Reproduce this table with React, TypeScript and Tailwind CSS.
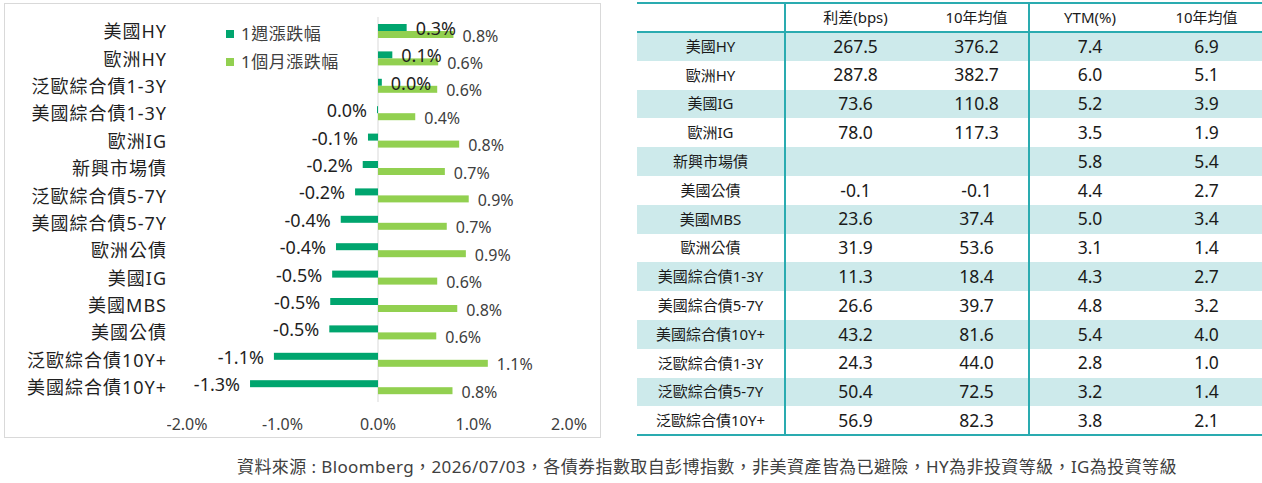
const FONT = '"Noto Sans", "Noto Sans CJK TC", sans-serif'

const SCALE = 95.5 // px per 1%
const ZERO = 211   // zero line inside the plot svg
const ROW = 27.4
const TOP = 13.5

const bars = [
  { name: '美國HY', w: 0.3, wl: '0.3%', m: 0.79, ml: '0.8%' },
  { name: '歐洲HY', w: 0.15, wl: '0.1%', m: 0.63, ml: '0.6%' },
  { name: '泛歐綜合債1-3Y', w: 0.04, wl: '0.0%', m: 0.62, ml: '0.6%' },
  { name: '美國綜合債1-3Y', w: -0.01, wl: '0.0%', m: 0.39, ml: '0.4%' },
  { name: '歐洲IG', w: -0.105, wl: '-0.1%', m: 0.85, ml: '0.8%' },
  { name: '新興市場債', w: -0.16, wl: '-0.2%', m: 0.7, ml: '0.7%' },
  { name: '泛歐綜合債5-7Y', w: -0.24, wl: '-0.2%', m: 0.95, ml: '0.9%' },
  { name: '美國綜合債5-7Y', w: -0.39, wl: '-0.4%', m: 0.72, ml: '0.7%' },
  { name: '歐洲公債', w: -0.44, wl: '-0.4%', m: 0.92, ml: '0.9%' },
  { name: '美國IG', w: -0.48, wl: '-0.5%', m: 0.62, ml: '0.6%' },
  { name: '美國MBS', w: -0.5, wl: '-0.5%', m: 0.83, ml: '0.8%' },
  { name: '美國公債', w: -0.51, wl: '-0.5%', m: 0.61, ml: '0.6%' },
  { name: '泛歐綜合債10Y+', w: -1.09, wl: '-1.1%', m: 1.15, ml: '1.1%' },
  { name: '美國綜合債10Y+', w: -1.34, wl: '-1.3%', m: 0.78, ml: '0.8%' },
]

const rows = [
  ['美國HY', '267.5', '376.2', '7.4', '6.9'],
  ['歐洲HY', '287.8', '382.7', '6.0', '5.1'],
  ['美國IG', '73.6', '110.8', '5.2', '3.9'],
  ['歐洲IG', '78.0', '117.3', '3.5', '1.9'],
  ['新興市場債', '', '', '5.8', '5.4'],
  ['美國公債', '-0.1', '-0.1', '4.4', '2.7'],
  ['美國MBS', '23.6', '37.4', '5.0', '3.4'],
  ['歐洲公債', '31.9', '53.6', '3.1', '1.4'],
  ['美國綜合債1-3Y', '11.3', '18.4', '4.3', '2.7'],
  ['美國綜合債5-7Y', '26.6', '39.7', '4.8', '3.2'],
  ['美國綜合債10Y+', '43.2', '81.6', '5.4', '4.0'],
  ['泛歐綜合債1-3Y', '24.3', '44.0', '2.8', '1.0'],
  ['泛歐綜合債5-7Y', '50.4', '72.5', '3.2', '1.4'],
  ['泛歐綜合債10Y+', '56.9', '82.3', '3.8', '2.1'],
]

function Plot() {
  return (
    <svg width={430} height={433} className="block shrink-0">
      <line x1={ZERO} x2={ZERO} y1={13} y2={398} stroke="#d9d9d9" strokeWidth={1} />
      {bars.map((b, i) => {
        const top = TOP + ROW * i
        const dw = Math.max(Math.abs(b.w) * SCALE, 1)
        const dx = b.w >= 0 ? ZERO : ZERO - dw
        const mw = b.m * SCALE
        return (
          <g key={b.name}>
            <rect x={dx} y={top + 6.5} width={dw} height={7} fill="#00a56e" />
            <rect x={ZERO} y={top + 13.5} width={mw} height={7} fill="#92d050" />
            <text
              x={b.w >= 0 ? ZERO + dw + 9 : dx - 10}
              y={top + 10.5}
              textAnchor={b.w >= 0 ? 'start' : 'end'}
              dominantBaseline="central"
              className="fill-[#1f1f1f] text-[18px]"
            >
              {b.wl}
            </text>
            <text
              x={ZERO + mw + 9}
              y={top + 18}
              dominantBaseline="central"
              className="fill-[#404040] text-[16px]"
            >
              {b.ml}
            </text>
          </g>
        )
      })}
      {['-2.0%', '-1.0%', '0.0%', '1.0%', '2.0%'].map((t, k) => (
        <text
          key={t}
          x={ZERO + (k - 2) * SCALE}
          y={420}
          textAnchor="middle"
          dominantBaseline="central"
          className="fill-[#404040] text-[16px]"
        >
          {t}
        </text>
      ))}
    </svg>
  )
}

function Chart() {
  return (
    <div className="relative ml-[4px] mt-[3px] flex h-[435px] w-[597px] shrink-0 border border-[#d9d9d9] bg-white">
      <div className="flex w-[162px] shrink-0 flex-col pt-[13.5px]">
        {bars.map(b => (
          <div
            key={b.name}
            className="flex h-[27.4px] items-center justify-end text-[18px] leading-none tracking-[1px] text-[#1f1f1f]"
          >
            {b.name}
          </div>
        ))}
      </div>
      <Plot />
      <div className="absolute left-[221px] top-[16px] flex flex-col text-[17px] tracking-[0.5px] text-[#404040]">
        <div className="flex h-[28px] items-center gap-[7px]">
          <span className="h-[8px] w-[8px] bg-[#00a56e]" />
          <span>1週漲跌幅</span>
        </div>
        <div className="flex h-[28px] items-center gap-[7px]">
          <span className="h-[8px] w-[8px] bg-[#92d050]" />
          <span>1個月漲跌幅</span>
        </div>
      </div>
    </div>
  )
}

function Table() {
  return (
    <table className="ml-[36px] mt-[2px] w-[626px] table-fixed border-collapse text-center text-[#1a1a1a]">
      <colgroup>
        <col className="w-[148px]" />
        <col className="w-[140px]" />
        <col className="w-[104px]" />
        <col className="w-[121px]" />
        <col className="w-[113px]" />
      </colgroup>
      <thead>
        <tr className="h-[29px] border-y-2 border-[#2aabb0] text-[15px]">
          <th className="border-r-2 border-[#2aabb0] font-normal"></th>
          <th className="font-normal">利差(bps)</th>
          <th className="border-r-2 border-[#2aabb0] font-normal">10年均值</th>
          <th className="font-normal">YTM(%)</th>
          <th className="font-normal">10年均值</th>
        </tr>
      </thead>
      <tbody>
        {rows.map((r, i) => (
          <tr
            key={r[0]}
            className={
              'h-[28.8px] ' +
              (i % 2 === 0 ? 'bg-[#cdeaeb] ' : 'bg-white ') +
              (i === rows.length - 1 ? 'border-b-2 border-[#2aabb0]' : '')
            }
          >
            <td className="border-r-2 border-[#2aabb0] p-0 text-[15px] leading-none">{r[0]}</td>
            <td className="p-0 text-[17.5px] leading-none">{r[1]}</td>
            <td className="border-r-2 border-[#2aabb0] p-0 text-[17.5px] leading-none">{r[2]}</td>
            <td className="p-0 text-[17.5px] leading-none">{r[3]}</td>
            <td className="p-0 text-[17.5px] leading-none">{r[4]}</td>
          </tr>
        ))}
      </tbody>
    </table>
  )
}

export default function App() {
  return (
    <div className="h-[483px] w-[1262px] overflow-hidden bg-white" style={{ fontFamily: FONT }}>
      <div className="flex items-start">
        <Chart />
        <Table />
      </div>
      <p className="mt-[17px] pl-[237px] text-[17px] leading-[24px] tracking-[0.4px] text-[#404040]">
        資料來源 : Bloomberg，2026/07/03，各債券指數取自彭博指數，非美資產皆為已避險，HY為非投資等級，IG為投資等級
      </p>
    </div>
  )
}
